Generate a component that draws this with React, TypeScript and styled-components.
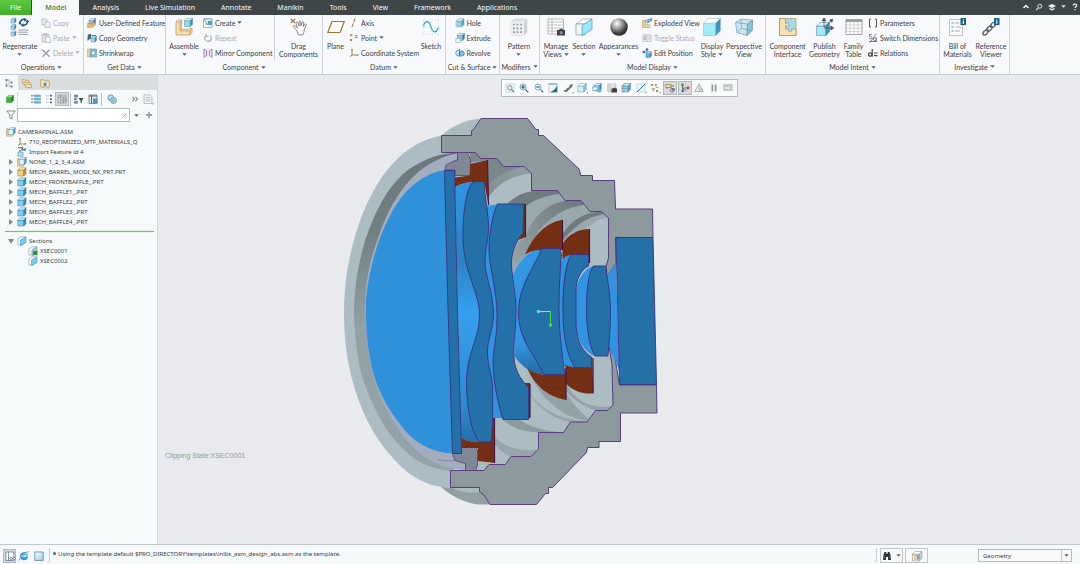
import React from 'react';
import styled, { createGlobalStyle } from 'styled-components';

const GlobalStyle = createGlobalStyle`
  * { box-sizing: border-box; }
  html, body, #root { height: 100%; }
  body {
    margin: 0;
    overflow: hidden;
    font-family: 'Noto Sans', 'Open Sans', sans-serif;
    font-size: 6px;
    line-height: 8px;
    color: #3c4145;
    background: #e9eaee;
  }
  button, input, select { font: inherit; color: inherit; margin: 0; padding: 0; border: 0; background: none; border-radius: 0; }
  svg { display: block; flex: none; overflow: visible; }
`;

const Shell = styled.div`
  display: flex;
  flex-direction: column;
  height: 100vh;
`;

/* ---------- menu bar ---------- */
const MenuBar = styled.nav`
  display: flex;
  flex: none;
  height: 15px;
  font-size: 7px;
  background: #3e4647;
`;
const MenuTab = styled.button<{ $kind?: 'file' | 'active' }>`
  height: 15px;
  padding: 0 ${p => (p.$kind === 'file' ? 10 : 13)}px;
  margin-right: ${p => (p.$kind === 'file' ? 1 : 0)}px;
  white-space: nowrap;
  font-weight: ${p => (p.$kind === 'active' ? 600 : 400)};
  color: ${p => (p.$kind === 'active' ? '#4f8c3c' : '#f6f8f8')};
  background: ${p => (p.$kind === 'file' ? 'linear-gradient(#5cc93e, #43ad2c)' : p.$kind === 'active' ? '#f8f9fb' : 'transparent')};
`;
const MenuTools = styled.div`
  display: flex;
  align-items: center;
  gap: 5px;
  height: 13px;
  margin-left: auto;
  padding-right: 1px;
`;
const BareButton = styled.button`
  display: flex;
  align-items: center;
  justify-content: center;
  color: inherit;
`;

/* ---------- ribbon ---------- */
const Ribbon = styled.div`
  display: flex;
  flex: none;
  height: 60px;
  font-family: Lato, 'Noto Sans', sans-serif;
  font-size: 7px;
  background: #f8f9fb;
  border-bottom: 1px solid #c6cdd0;
`;
const GroupBox = styled.section<{ $w: number }>`
  display: flex;
  flex-direction: column;
  flex: none;
  width: ${p => p.$w}px;
  border-right: 1px solid #cdd0d4;
`;
const GroupBody = styled.div<{ $center?: boolean }>`
  display: flex;
  height: 45px;
  justify-content: ${p => (p.$center ? 'center' : 'flex-start')};
`;
const GroupLabel = styled.button`
  display: flex;
  align-items: center;
  justify-content: center;
  gap: 2px;
  height: 15px;
  white-space: nowrap;
`;
const Divider = styled.div`
  width: 1px;
  background: #cdd0d4;
`;
const BigButton = styled.button<{ $w: number }>`
  display: flex;
  flex-direction: column;
  align-items: center;
  flex: none;
  width: ${p => p.$w}px;
  padding-top: 3px;
  white-space: nowrap;
`;
const BigLabel = styled.span`
  display: flex;
  flex-direction: column;
  align-items: center;
  margin-top: 6px;
`;
const LabelLine = styled.span`
  display: flex;
  align-items: center;
  justify-content: center;
  gap: 2px;
  height: 8px;
`;
const Stack = styled.div<{ $w: number }>`
  display: flex;
  flex-direction: column;
  flex: none;
  width: ${p => p.$w}px;
`;
const SmallButton = styled.button<{ $off?: boolean }>`
  display: flex;
  align-items: center;
  gap: 2px;
  height: 15px;
  padding-left: 1px;
  white-space: nowrap;
  color: ${p => (p.$off ? '#a9acb0' : 'inherit')};
`;

const Caret = ({ c = '#5b6064' }: { c?: string }) => (
  <svg width="5" height="3" viewBox="0 0 5 3"><path d="M0.3 0.2h4.4L2.5 2.8z" fill={c} /></svg>
);

/* ---------- icon drawings ---------- */
type CubeProps = { x?: number; y?: number; s?: number; f?: string; t?: string; r?: string; k?: string };
const Cube = ({ x = 0, y = 0, s = 9, f = '#9fe0f7', t = '#e6f6fc', r = '#2a8fc4', k = '#5d8fa8' }: CubeProps) => {
  const d = s * 0.28;
  const w = s - d;
  return (
    <g stroke={k} strokeWidth="0.5" strokeLinejoin="round">
      <path d={`M${x} ${y + d}h${w}v${w}h${-w}z`} fill={f} />
      <path d={`M${x} ${y + d}l${d} ${-d}h${w}l${-d} ${d}z`} fill={t} />
      <path d={`M${x + w} ${y + d}l${d} ${-d}v${w}l${-d} ${d}z`} fill={r} />
    </g>
  );
};

const icons: Record<string, React.ReactNode> = {
  regenerate: (
    <g>
      <Cube x={0} y={0} s={5} /><Cube x={0} y={6.5} s={5} /><Cube x={0} y={13} s={5} />
      <path d="M9 5a4 3.6 0 0 1 5-3.6M16.5 3.2a4 3.6 0 0 1-4.6 4" fill="none" stroke="#17587f" strokeWidth="1.6" />
      <path d="M13.2 0l3 1.8-3 2zM12.4 5.2l-3 1.9 3 1.9zM7.2 4.4h3.6L9 7zM14.7 4h3.4l-1.7-2.6z" fill="#17587f" />
      <path d="M7.5 12h10M6.5 14.2h10M7.5 16.4h10" stroke="#9aa0a4" strokeWidth="1" />
    </g>
  ),
  assemble: (
    <g>
      <path d="M1 4h4l1.6-1.6v9H13l2-1h2v4L15 17H1z" fill="#f6dfae" stroke="#b7935a" strokeWidth="0.7" />
      <path d="M1 4l1.5-2H6.6L5 4v9h10l2-2M5 13l1.6-1.8M15 13v4" fill="none" stroke="#b7935a" strokeWidth="0.7" />
      <Cube x={9.5} y={0.5} s={8} f="#8edcf8" />
    </g>
  ),
  drag: (
    <g fill="none">
      <path d="M0.8 1l4.4 4M5.2 1L0.8 5" stroke="#9a7a3c" strokeWidth="1.2" />
      <path d="M6.5 12L3.6 9.2c-.9-1 .4-2.2 1.4-1.4l2.4 2L6 5.4c-.4-1.2 1.2-1.7 1.7-.6l1.4 3.4L8.8 4c0-1.2 1.6-1.3 1.8-.1l.5 4 .9-3.5c.3-1.1 1.800-.8 1.700.3l-.4 4 1.500-2.400c.7-1 2-.2 1.500.8L14.500 11l-.6 3.200-1 2.600H8.400z" fill="#fff" stroke="#565b5f" strokeWidth="0.7" />
    </g>
  ),
  plane: <path d="M5 3.5h12.3L13 14.5H.8z" fill="#fcfbf8" stroke="#9a7a3c" strokeWidth="1.2" />,
  sketch: (
    <g fill="none">
      <path d="M2 1v16M9 1v16M16 1v16M1 2h16M1 9h16M1 16h16" stroke="#c3c7ca" strokeWidth="0.7" strokeDasharray="1 2" />
      <path d="M1.5 7C4 2 7 2.5 8.8 8.5s5.2 7.5 7.4 1.5" stroke="#2fa3d8" strokeWidth="1.1" />
      <circle cx="1.6" cy="8" r="0.9" fill="#fff" stroke="#2fa3d8" strokeWidth="0.5" />
      <circle cx="16.4" cy="10" r="0.9" fill="#fff" stroke="#2fa3d8" strokeWidth="0.5" />
    </g>
  ),
  pattern: (
    <g>
      <path d="M1 4l3-3h13v13l-3 3H1z" fill="#e1e3e4" stroke="#c6c9cb" strokeWidth="0.6" />
      <path d="M1 4h13v13H1z" fill="#eff0f1" />
      <path d="M14 4l3-3v13l-3 3z" fill="#cdd0d2" />
      <path d="M3 6.500h9M3 10.300h9M3 14.100h9" stroke="#8b8f92" strokeWidth="1.700" strokeDasharray="1.700 1.950" />
    </g>
  ),
  manage: (
    <g>
      <path d="M1 1h15.5v15H1z" fill="#fff" stroke="#a4a8ab" strokeWidth="0.8" />
      <path d="M1 4h15.5M1 7h15.5M1 10h15.5M1 13h15.5M5 1v15" stroke="#a4a8ab" strokeWidth="0.7" />
      <path d="M10 12h2l1-1.3h2.400l1 1.300H18v5.500h-8z" fill="#3c4144" /><circle cx="14.1" cy="14.7" r="1.6" fill="#8d9294" />
    </g>
  ),
  section: (
    <g stroke="#8d959a" strokeWidth="0.7" strokeLinejoin="round">
      <path d="M1 6l7-5h9l-7 5z" fill="#fff" /><path d="M1 6h9v11H1z" fill="#f4f6f7" />
      <path d="M7 7.500L17 1v10.500L7 17.500z" fill="#9be6fa" stroke="#4a9fc0" />
    </g>
  ),
  sphere: <circle cx="9" cy="9" r="8.8" fill="url(#ballShade)" />,
  display: <Cube x={0.5} y={0.5} s={17} f="#a4ebfa" t="#fff" r="#3b95bd" k="#8bb4c6" />,
  perspective: (
    <g stroke="#6f9bae" strokeWidth="0.7" strokeLinejoin="round">
      <path d="M0.5 4.5L6 1l11.5 1-.5 10.5L12 17.500l-10-3z" fill="#cbe7ef" />
      <path d="M12.500 6l5-4-.5 10.500-5 5z" fill="#8ec6da" />
      <path d="M0.500 4.500L12.500 6l5-4M12.500 6L12 17.500M6 1l.5 9.500 10.500 2M6.500 10.500L2 14.500" fill="none" />
    </g>
  ),
  compInterface: (
    <g>
      <path d="M0.5 0.5H17v17H0.500z" fill="#9fdcf2" stroke="#b08a4a" strokeWidth="0.6" />
      <path d="M0.5 0.5H6.500v5.200c1.200-1.500 3.400-.8 3.400 1s-2.200 2.300-3.400.9V11h3.300c-.9 2 .3 3 1.600 2.900 1.500-.2 1.700-1.800 1-2.900H17v6.500H0.500z" fill="#f8e2b4" stroke="#b08a4a" strokeWidth="0.7" />
    </g>
  ),
  publish: (
    <g>
      <Cube x={0.5} y={4.5} s={13} f="#a4ebfa" t="#d9f3fa" r="#3b95bd" k="#477a90" />
      <path d="M8 9V1M8 9l7-6M8 10h8M8 0L6 2.800h4zM16.800 1.200l-3.200.9 2.200 2.200zM17.800 10l-3-2v4z" fill="#474c50" stroke="#474c50" strokeWidth="0.7" />
    </g>
  ),
  family: (
    <g>
      <path d="M1 1.500h16v15H1z" fill="#fff" stroke="#8d9194" strokeWidth="0.8" />
      <path d="M1 3h16" stroke="#8d9194" strokeWidth="1.8" />
      <path d="M1 7h16M1 10.200h16M1 13.400h16M5 3v13M9 3v13M13 3v13" stroke="#b6babd" strokeWidth="0.6" />
    </g>
  ),
  bom: (
    <g>
      <path d="M0.500 1.500H13.500v16H0.500z" fill="#f7f8f9" stroke="#b6babd" strokeWidth="0.8" />
      <path d="M2.500 5h2M2.500 9h2M2.500 13h2" stroke="#6db9de" strokeWidth="1.6" /><path d="M6 5h4M7 9h5M6 13h5" stroke="#9ba0a3" strokeWidth="0.8" />
      <path d="M11.500 0h5.500v7h-5.500z" fill="#16617f" /><path d="M14.300 1.200v1.200M14.300 3v3" stroke="#fff" strokeWidth="1.1" />
    </g>
  ),
  refViewer: (
    <g>
      <g fill="none" stroke="#5b6064" strokeWidth="1.3">
        <ellipse cx="3.6" cy="14.4" rx="3.3" ry="1.9" transform="rotate(-45 3.6 14.4)" />
        <ellipse cx="7.4" cy="10.6" rx="3.3" ry="1.9" transform="rotate(-45 7.4 10.6)" />
        <ellipse cx="11" cy="7" rx="3" ry="1.9" transform="rotate(-45 11 7)" />
      </g>
      <path d="M12 0h5.500v7H12z" fill="#16617f" /><path d="M14.800 1.200v1.200M14.800 3v3" stroke="#fff" strokeWidth="1.1" />
    </g>
  ),

  copy: <g fill="#eceeef" stroke="#b4b8bb" strokeWidth="0.8"><path d="M1 1h4l1 1v5H1z" /><path d="M4 3.500h4l1.200 1.200V9.500H4z" /></g>,
  paste: <g fill="#e3e5e6" stroke="#b4b8bb" strokeWidth="0.8"><path d="M1 1.500h7v7.500H1zM3 .6h3v1.600H3z" /><path d="M4.500 4h3.500l1.400 1.300v4.200H4.500z" fill="#fafafa" /></g>,
  del: <path d="M1.500 1.800l7 7M8.500 1.800l-7 7" stroke="#97999c" strokeWidth="1.3" />,
  udf: <g><Cube x={2} y={0.5} s={6.5} f="#a9bde4" r="#4a6fb0" /><path d="M0.500 5.500h4V9.500h-4zM5 4l4 2-3 3.500z" fill="#eeb95c" stroke="#a97c34" strokeWidth="0.4" /></g>,
  copyGeo: <g><path d="M0.800 1.500L4 .8v5L.8 7z" fill="#3d6b84" /><path d="M4 2.500h5M1 3.800v4" stroke="#555" strokeWidth="0.8" /><Cube x={4} y={3.5} s={5.5} /></g>,
  shrink: <g><path d="M0.500 1h3v8h-3z" fill="#f2d49a" stroke="#a98b56" strokeWidth="0.4" /><path d="M3 1h6.500v8H3z" fill="#8ac4de" stroke="#4c86a0" strokeWidth="0.5" /><path d="M4.500 3.500L8 2.500v4l-3.500 1z" fill="#e7f6fc" stroke="#33799c" strokeWidth="0.5" /></g>,
  create: <g><path d="M0.500 1h3v5.500h5.500V9.500H.5z" fill="#f0f2f3" stroke="#b7935a" strokeWidth="0.7" /><path d="M1 .8h8v5.500H4z" fill="#cfeaf5" stroke="#5c93ac" strokeWidth="0.7" /><path d="M5 3h4v4H5z" fill="#49a5cf" /></g>,
  repeat: <path d="M3 2.500a3.300 3.300 0 1 0 4.300.2M3 .8v2.400h2.400" fill="none" stroke="#a4a7aa" strokeWidth="1.1" />,
  mirror: <g fill="#f0e8f7" stroke="#8a6aae" strokeWidth="0.8"><path d="M1 1l2.500 1.500v5L1 9.500zM9 1L6.500 2.500v5L9 9.500z" /><path d="M5 0.500v9" strokeDasharray="1 1" strokeWidth="0.5" /></g>,
  axis: <path d="M6 .5L2.800 9.500" stroke="#9a7a3c" strokeWidth="1" strokeDasharray="4 1.200" />,
  point: <path d="M1 1l2.400 2.400M3.400 1L1 3.400M5.800 2.600h3M5.800 4.400h3M.8 5.800l2.400 2.400M3.200 5.800L.8 8.200" stroke="#9a7a3c" strokeWidth="0.9" />,
  csys: <g><path d="M3 1v6h6M3 7L.8 9" fill="none" stroke="#9a7a3c" strokeWidth="0.9" /><path d="M2 2.200h2L3 .4zM7.800 6v2L9.600 7z" fill="#9a7a3c" /></g>,
  hole: <g><Cube x={1} y={0.8} s={8} f="#cdebf6" r="#58a7cb" /><ellipse cx="4" cy="6" rx="1.3" ry="1.8" fill="#fff" stroke="#2a7ca6" strokeWidth="0.7" /></g>,
  extrude: <g><Cube x={2.5} y={0.5} s={7} f="#8fcde6" t="#cfe9f3" r="#2f83ac" /><path d="M0.800 5.500h4.500V9.500H.8z" fill="#f2f4f5" stroke="#8d9497" strokeWidth="0.5" /></g>,
  revolve: <g><ellipse cx="3.2" cy="5" rx="2.4" ry="2.8" fill="#cdebf6" stroke="#2f83ac" strokeWidth="0.7" /><circle cx="6.7" cy="5.5" r="2.6" fill="#7cc6e6" stroke="#2f83ac" strokeWidth="0.7" /><path d="M4.500 1v8" stroke="#2b6988" strokeWidth="0.7" /></g>,
  exploded: <g><path d="M.5 2.500h2.300v4.200h5V9.500H.5z" fill="#f2d49a" stroke="#b08a4a" strokeWidth="0.5" /><Cube x={3.5} y={1.5} s={3.5} /><Cube x={6.7} y={0.5} s={3} /></g>,
  toggle: <g fill="none" stroke="#b2b5b8" strokeWidth="0.8"><path d="M1 1.800h8v6.500H1zM5 1.800v6.500M6 4h2.500M6 6h2.500" /><path d="M2 3.500h1.800v3H2z" fill="#c6c9cb" /></g>,
  editPos: <g><path d="M5 .5v7M1 4h8M5 .3L3.800 2h2.400zM.6 4l1.700-1.200v2.400z" stroke="#2b6988" strokeWidth="0.7" fill="#2b6988" /><Cube x={4} y={4} s={5.5} f="#58b4dc" /></g>,
  params: <g fill="none" stroke="#55595d" strokeWidth="1"><path d="M3 1H1.500v8H3M7 1h1.500v8H7" /></g>,
  switchDim: <g fill="none" stroke="#61666a" strokeWidth="0.8"><path d="M3.800 1.500H1.500v2C3 3 4 3.800 3.800 4.800S2 6 1 5.400M2 9.500L8 .8" /><circle cx="6.8" cy="6.3" r="1.5" /><path d="M8.300 4.500V9M1 8.500h8" /></g>,
  relations: <g fill="none" stroke="#3f4447" strokeWidth="1.2"><circle cx="2.2" cy="6.5" r="1.7" /><path d="M4.200 1v7.800M6 5h3.500M6 7.600h3.500" /></g>,

  modelTree: <g fill="#777c80"><path d="M1.500 1h2v2h-2zM1.500 6.500h2v2h-2zM6.500 3.500h2V5.500h-2zM6.500 7.500h2V9.500h-2z" /><path d="M2.500 3v4M4 2h2M5 2v6.500h1.500" fill="none" stroke="#888" strokeWidth="0.5" /></g>,
  layers: <g fill="#f7e9c8" stroke="#b98f45" strokeWidth="0.7"><path d="M.6 1.500h2l.6.800H6.400v3H.6z" /><path d="M2.200 3.700h2l.6.800H8v3H2.200z" /><path d="M3.800 5.900h2l.6.600H9.500v2.900H3.800z" /></g>,
  favFolder: <g><path d="M.8 1.800h3l1 1.200h4.400v6H.8z" fill="#f8ebcb" stroke="#b98f45" strokeWidth="0.7" /><path d="M5 4l.7 1.500 1.600.1-1.200 1 .4 1.600L5 7.400l-1.500.8.400-1.600-1.200-1 1.600-.1z" fill="#2a84ad" /></g>,
  greenCube: <Cube x={0.5} y={0.5} s={9} f="#3fae3a" t="#9ddc8d" r="#237a24" k="#2c8a2a" />,
  list1: <g><path d="M3.500 1h6v1.800h-6zM3.500 4.200h6V6h-6zM3.500 7.400h6v1.800h-6z" fill="#63bfe0" stroke="#3c7d97" strokeWidth="0.4" /><path d="M0 1.800h2.500M0 5h2.500M0 8.200h2.500" stroke="#585c60" strokeWidth="0.9" /></g>,
  list2: <g><path d="M6 .8h2v1.800H6zM6 4.200h2V6H6zM6 7.500h2v1.800H6z" fill="#666b6f" /><path d="M2 1.800h3M2 5h3M2 8.200h3" stroke="#84888b" strokeWidth="0.7" strokeDasharray="1 0.6" /></g>,
  columns: <g fill="none" stroke="#7c8184" strokeWidth="0.6"><path d="M1 1h8v8H1zM1 3h8M3.500 1v8M6.500 3v6" /><path d="M5 5h4.500v2H5z" fill="#c8cbcd" /></g>,
  treeFilter: <g><path d="M.5 1h3v2h-3zM.5 4.200h2v1.800h-2zM.5 7.500h3v1.800h-3z" fill="#5fa9c6" stroke="#4c5256" strokeWidth="0.5" /><path d="M4.500 4h5.300L7.800 6.500v3L6.500 8.500v-2z" fill="#45494d" /></g>,
  treeCols: <g><path d="M1 1h8v8.500H1z" fill="#dff0f6" stroke="#5c6165" strokeWidth="0.7" /><path d="M1 2h8M3.500 1v8" stroke="#5c6165" strokeWidth="1" /><path d="M5 4.500h4.500v4.500H5z" fill="#4d9abb" /></g>,
  gears: <g fill="#b9dbe8" stroke="#4b8aa4" strokeWidth="0.8"><circle cx="3.8" cy="3.8" r="2.9" /><circle cx="6.5" cy="6.5" r="2.9" /><circle cx="6.5" cy="6.5" r="0.9" fill="#fff" /></g>,
  doc: <g><path d="M1 .8h6l2 2V9.500H1z" fill="#f4f5f6" stroke="#a4a8ab" strokeWidth="0.7" /><path d="M2.500 3.500h4M2.500 5.300h5M2.500 7.100h5" stroke="#9ba0a3" strokeWidth="0.6" /><path d="M9 10.300l1.500-1.500v1.500z" fill="#666" /></g>,
  funnel: <path d="M.8 1h8.400L6 5v4L4 8V5z" fill="#fff" stroke="#6f7477" strokeWidth="0.8" />,
  plus: <path d="M5 1.800v6.400M1.800 5h6.400" stroke="#85898c" strokeWidth="1.3" />,
  more: <path d="M2.500 2.800L4.500 5l-2 2.200M5.500 2.800L7.500 5l-2 2.200" fill="none" stroke="#4c5154" strokeWidth="1" />,

  asm: <g><path d="M.5 2L2 .8v6.400h5.500L6.500 9.200h-6z" fill="#f3d69c" stroke="#b08a4a" strokeWidth="0.5" /><Cube x={2.3} y={0.6} s={7} f="#e4f5fb" r="#4aa3cc" /></g>,
  importF: <g><path d="M1 .8h5L4.500 3h4M3 3v3" fill="none" stroke="#44484b" strokeWidth="0.9" /><path d="M5 2l4.300-1L8.500 4.500z" fill="#44a0cb" /><path d="M1 5h5v4.200H1z" fill="#b4dff0" stroke="#3e84a6" strokeWidth="0.5" /></g>,
  partTan: <Cube x={0.8} y={0.8} s={8.2} f="#f6d089" t="#fbe9bf" r="#d08f2d" k="#9c6c22" />,
  part: <Cube x={0.8} y={0.8} s={8.2} f="#7fcdf0" t="#d3effa" r="#2d8fc4" k="#37809f" />,
  sect: <g stroke="#7f8a90" strokeWidth="0.5"><path d="M.8 3l3-2.200h5l-3 2.200v6h-5z" fill="#f4f6f7" /><path d="M3.500 4L9 1v5.500L3.500 9.500z" fill="#74cdf0" stroke="#3385a8" /></g>,
  sectOn: <g stroke="#7f8a90" strokeWidth="0.5"><path d="M.8 3l3-2.200h5l-3 2.200v6h-5z" fill="#f4f6f7" /><path d="M4 4l5-3v5.500L4 9.500z" fill="#a9d6e4" stroke="#3385a8" /><path d="M5 4.800h4.500v4.500H5z" fill="#3ba636" stroke="none" /><path d="M5.800 5.800l3 2.700M8.800 5.800l-3 2.700" stroke="#174f15" /></g>,

  refit: <g><path d="M.8 1h8.400v8H.8z" fill="#f8fafb" stroke="#b4b9bc" strokeWidth="0.5" /><circle cx="4.8" cy="4.8" r="2.3" fill="#d7ebf3" stroke="#5c7f8f" strokeWidth="0.8" /><path d="M6.500 6.500L9 9" stroke="#5c7f8f" strokeWidth="1.1" /></g>,
  zoomIn: <g><circle cx="4" cy="4" r="3" fill="#d9edf6" stroke="#6a9cb4" strokeWidth="0.8" /><path d="M4 2.300v3.400M2.300 4h3.400" stroke="#17587f" strokeWidth="1.2" /><path d="M6.300 6.300L9.300 9.300" stroke="#3c6c84" strokeWidth="1.2" /></g>,
  zoomOut: <g><circle cx="4" cy="4" r="3" fill="#e4f1f7" stroke="#6a9cb4" strokeWidth="0.8" /><path d="M2.300 4h3.400" stroke="#17587f" strokeWidth="1" /><path d="M6.300 6.300L9.300 9.300" stroke="#3c6c84" strokeWidth="1.2" /></g>,
  repaint: <g><path d="M.8 1h8.400v8.200H.8z" fill="#f3f6f7" stroke="#9aa1a5" strokeWidth="0.5" /><path d="M9.200 2v7.200H2C5.500 8 8 5.500 9.200 2z" fill="#1f6f96" /><path d="M.8 1h8.400" stroke="#58a7cb" strokeWidth="1" /></g>,
  render: <g><path d="M.8 7c1.500.6 2.700-.3 3-2l2-.5 1-2.500 2.500-1.200c.5 2 .2 3-1 4L6 6.500c-1 2.500-3.500 3-5 2z" fill="#6f7477" /><path d="M9 10.300l1.500-1.500v1.500z" fill="#555" /></g>,
  styleCube: <g><Cube x={0.8} y={0.5} s={8.5} f="#d3f2fa" t="#fff" r="#8ccbe0" k="#5d9ab2" /><path d="M9.300 10.300l1.500-1.500v1.500z" fill="#555" /></g>,
  orient: <g><Cube x={1.8} y={0.5} s={7.5} f="#a5dcef" /><path d="M.5 4h5v3.500h-5z" fill="#e8f4f8" stroke="#3e84a6" strokeWidth="0.5" /><circle cx="7.5" cy="7.5" r="1.8" fill="#70c3e4" stroke="#33799c" strokeWidth="0.4" /></g>,
  viewMgr: <g><path d="M.8 1h8v7.500h-8zM.8 3h8M.8 5h8M.8 7h8M3 1v7.500" fill="#fff" stroke="#8f9497" strokeWidth="0.5" /><path d="M4.500 5.500H6l.7-.8h1.400l.6.800H10v4H4.500z" fill="#3c4144" /></g>,
  persp: <g><Cube x={1} y={0.5} s={8.5} f="#a3d3e5" t="#cfe9f3" r="#5fa8c6" k="#4a7f95" /><path d="M3 .8v8M1 5.500h8" stroke="#4a7f95" strokeWidth="0.4" /></g>,
  clip: <g><path d="M1 1h8v8H1z" fill="#eef6f9" stroke="#9dbdca" strokeWidth="0.5" /><path d="M1 9L9 1" stroke="#2a7ca6" strokeWidth="1" /><path d="M9 10.300l1.500-1.500v1.500z" fill="#555" /></g>,
  datum: <g stroke="#94753a" strokeWidth="0.8" fill="none"><path d="M1 1l2 2M3 1L1 3M4.500 1.500h2l-1 2M6 4l2.500 1M1.500 5.500l3 1M4.500 5l-2 3.500M6 7l2 2M8 7L6 9" /><path d="M9 10.300l1.500-1.500v1.500z" fill="#555" stroke="none" /></g>,
  annot: <g fill="none" stroke="#55595d" strokeWidth="0.7"><path d="M.8 1.500h5v3h-5z" fill="#f6e4b8" stroke="#94753a" /><path d="M6 3h3M6.500 4.500v1h3M2 4.500V6" /><circle cx="7" cy="7.5" r="1.7" /><circle cx="8.5" cy="6.8" r="1" /></g>,
  spin: <g><path d="M2.500 1.800v6M2.500 5h5M2.500 5l4 3" stroke="#606569" strokeWidth="0.8" /><circle cx="2.5" cy="2" r="1.4" fill="#3ea03a" /><circle cx="8" cy="5" r="1.4" fill="#cf4233" /><circle cx="2.8" cy="8" r="1.3" fill="#2d78b5" /></g>,
  simulate: <g fill="#eceeef" stroke="#a4a8ab" strokeWidth="0.9"><path d="M5 .8L9.200 8.500H.8z" /><path d="M5 3.500v3" /><circle cx="7" cy="7.3" r="1.4" /></g>,
  pause: <path d="M2.500 1.500h1.700v7H2.500zM5.800 1.500h1.700v7H5.800z" fill="#8d9194" />,
  resume: <g fill="#c9cccd" stroke="#a9adaf" strokeWidth="0.5"><path d="M.8 1.500h8.400v6H.8z" /><path d="M1 3.800h4v-1.600L7.500 5 5 7.500V6H1z" fill="#f0f1f2" /></g>,

  navToggle: <g><path d="M.8 1h8v8.500h-8zM3.500 1v8.500" fill="#fff" stroke="#3e6f88" strokeWidth="0.7" /><path d="M5 7.500h5" stroke="#33373a" strokeWidth="1" /><circle cx="6" cy="7.5" r="1.2" fill="#fff" stroke="#33373a" strokeWidth="0.5" /><circle cx="9" cy="7.5" r="1.2" fill="#fff" stroke="#33373a" strokeWidth="0.5" /></g>,
  browser: <g><circle cx="5" cy="5.3" r="3.7" fill="#3aa0d6" stroke="#1d6f9d" strokeWidth="0.5" /><path d="M.6 8.500C2 4 6 1.500 9.600 1c-2 1-3.300 2.500-4 4H9M3 5.200h4" fill="none" stroke="#eaf6fc" strokeWidth="0.9" /><path d="M.4 9.300C1 5 5.500 1 9.600.8" fill="none" stroke="#2b7fb0" strokeWidth="0.7" /></g>,
  fullScreen: <path d="M.8 1h8.400v8.400H.8z" fill="url(#paneShade)" stroke="#3b7390" strokeWidth="0.7" />,
  find: <g fill="#33383b"><path d="M1 9l.5-5L2.500 1h1.700l.4 2h.8l.4-2h1.700l1 3L9 9H6V6H4v3z" /><path d="M2 6.500h1M7 6.500h1" stroke="#9aa" strokeWidth="0.6" /></g>,
  selBox: <g><Cube x={0.5} y={0.5} s={9.5} f="#f3f0e6" t="#fff" r="#c9cdd0" k="#80868a" /><path d="M2 5l2-1h3v4l-1.500 1H2z" fill="#5cb8de" /><path d="M2 5h3v4H2z" fill="#f2cf86" /></g>,
};

const Icon = ({ name, size = 10 }: { name: string; size?: number }) => (
  <svg width={size} height={size} viewBox={size > 12 ? '0 0 18 18' : '0 0 10 10'} aria-hidden="true">
    {icons[name]}
  </svg>
);

const Small = ({ icon, text, menu, off }: { icon: string; text: string; menu?: boolean; off?: boolean }) => (
  <SmallButton $off={off} disabled={off}>
    <Icon name={icon} />{text}{menu && <Caret c={off ? '#a9acb0' : undefined} />}
  </SmallButton>
);
const Big = ({ icon, lines, w, menu }: { icon: string; lines: string[]; w: number; menu?: 'below' | 'inline' }) => (
  <BigButton $w={w}>
    <Icon name={icon} size={18} />
    <BigLabel>
      {lines.map((l, i) => (
        <LabelLine key={l}>{l}{menu === 'inline' && i === lines.length - 1 && <Caret />}</LabelLine>
      ))}
      {menu === 'below' && <LabelLine><Caret /></LabelLine>}
    </BigLabel>
  </BigButton>
);
const Group = ({ w, label, center, children }: { w: number; label: string; center?: boolean; children: React.ReactNode }) => (
  <GroupBox $w={w}>
    <GroupBody $center={center}>{children}</GroupBody>
    <GroupLabel>{label}<Caret /></GroupLabel>
  </GroupBox>
);

/* ---------- work area ---------- */
const Work = styled.div`
  display: flex;
  flex: 1;
  min-height: 0;
`;
const Side = styled.aside`
  display: flex;
  flex-direction: column;
  flex: none;
  width: 158px;
  background: #f6fafb;
  border-right: 1px solid #d5d9dc;
`;
const SideTabs = styled.div`
  display: flex;
  height: 15px;
  background: #d8dedd;
`;
const SideTab = styled.button<{ $on?: boolean }>`
  display: flex;
  align-items: center;
  justify-content: center;
  width: 18px;
  background: ${p => (p.$on ? '#f6fafb' : 'transparent')};
`;
const SideTools = styled.div`
  display: flex;
  align-items: center;
  height: 18px;
  padding: 0 2px 0 5px;
`;
const ToolButton = styled.button<{ $w?: number; $on?: boolean }>`
  display: flex;
  align-items: center;
  justify-content: center;
  flex: none;
  width: ${p => p.$w ?? 14}px;
  height: 14px;
  border: 1px solid ${p => (p.$on ? '#b4b8ba' : 'transparent')};
  background: ${p => (p.$on ? '#d9dbdd' : 'transparent')};
`;
const Rule = styled.span<{ $dots?: boolean }>`
  width: 1px;
  height: 13px;
  margin: 0 ${p => (p.$dots ? 2 : 1)}px;
  border-left: 1px ${p => (p.$dots ? 'dotted #b9bdc0' : 'solid #b9bdc0')};
`;
const Spacer = styled.span`
  flex: 1;
`;
const SearchRow = styled.div`
  display: flex;
  align-items: center;
  height: 14px;
  padding-left: 6px;
  gap: 1px;
`;
const SearchBox = styled.div`
  display: grid;
  width: 113px;
  height: 14px;
  align-items: center;
  background: #fff;
  border: 1px solid #b5babd;
  & > * { grid-area: 1 / 1; }
`;
const SearchInput = styled.input`
  width: 100%;
  height: 12px;
  padding: 0 12px 0 3px;
`;
const ClearButton = styled.button`
  justify-self: end;
  width: 10px;
  height: 10px;
  display: grid;
  place-items: center;
`;
const Tree = styled.ul<{ $top: number }>`
  list-style: none;
  margin: 0;
  padding: ${p => p.$top}px 0 0 6px;
`;
const Row = styled.li<{ $nested?: boolean }>`
  display: flex;
  align-items: center;
  gap: 2px;
  height: 10px;
  padding-left: ${p => (p.$nested ? 22 : 0)}px;
  white-space: nowrap;
`;
const Twist = styled.span`
  display: flex;
  justify-content: center;
  width: 9px;
`;
const InsertLine = styled.div`
  height: 1px;
  margin: 4px 3px 0 5px;
  background: #6cc95c;
  box-shadow: 0 0 1px #6cc95c;
`;

const treeRows: { t: string; icon: string; twist?: boolean }[] = [
  { t: '710_REOPTIMIZED_MTF_MATERIALS_Q', icon: 'csys' },
  { t: 'Import Feature id 4', icon: 'importF' },
  { t: 'NONE_1_2_3_4.ASM', icon: 'asm', twist: true },
  { t: 'MECH_BARREL_MODI_NX_PRT.PRT', icon: 'partTan', twist: true },
  { t: 'MECH_FRONTBAFFLE_.PRT', icon: 'part', twist: true },
  { t: 'MECH_BAFFLE1_.PRT', icon: 'part', twist: true },
  { t: 'MECH_BAFFLE2_.PRT', icon: 'part', twist: true },
  { t: 'MECH_BAFFLE3_.PRT', icon: 'part', twist: true },
  { t: 'MECH_BAFFLE4_.PRT', icon: 'part', twist: true },
];
const Right = () => <svg width="4" height="6" viewBox="0 0 4 6"><path d="M0 0l4 3-4 3z" fill="#84898c" /></svg>;
const Down = () => <svg width="6" height="5" viewBox="0 0 6 5"><path d="M0 0h6L3 5z" fill="#84898c" /></svg>;

/* ---------- viewport ---------- */
const Viewport = styled.main`
  position: relative;
  display: flex;
  flex-direction: column;
  align-items: center;
  flex: 1;
  min-width: 0;
  overflow: hidden;
  background: #e9eaee;
`;
const ViewTools = styled.div`
  display: flex;
  align-items: center;
  justify-content: space-between;
  flex: none;
  width: 237px;
  height: 18px;
  margin-top: 4px;
  padding: 0 1px;
  background: #f8fafb;
  border: 1px solid #b6babd;
`;
const ModelSvg = styled.svg`
  position: absolute;
  left: 182px;
  top: 35px;
`;
const ClipNote = styled.span`
  position: absolute;
  left: 7px;
  top: 377px;
  font-family: 'Liberation Sans', Arial, sans-serif;
  font-size: 7px;
  color: #96999e;
`;
const viewTools = ['refit', 'zoomIn', 'zoomOut', 'repaint', 'render', 'styleCube', 'orient', 'viewMgr', 'persp', 'clip', 'datum', 'annot', 'spin', 'simulate', 'pause', 'resume'];

const Model = () => (
  <ModelSvg width="325" height="400" viewBox="340 110 325 400" role="img" aria-label="Sectioned lens assembly">
    <defs>
      <linearGradient id="ringDark" x1="0" y1="0" x2="0" y2="1"><stop offset="0" stopColor="#6b777b" /><stop offset="0.25" stopColor="#727f83" /><stop offset="0.55" stopColor="#93a1a5" /><stop offset="1" stopColor="#94a3a8" /></linearGradient>
      <linearGradient id="cres" x1="0" y1="1" x2="1" y2="0"><stop offset="0" stopColor="#98a6aa" /><stop offset="1" stopColor="#6c787c" /></linearGradient>
      <linearGradient id="cresMid" x1="0" y1="1" x2="1" y2="0"><stop offset="0" stopColor="#7c898d" /><stop offset="1" stopColor="#96a5aa" /></linearGradient>
      <linearGradient id="blueV" x1="0" y1="0" x2="0" y2="1"><stop offset="0" stopColor="#2f96e4" /><stop offset="0.3" stopColor="#2b83c6" /><stop offset="0.5" stopColor="#359fee" /><stop offset="0.85" stopColor="#2d8cd4" /><stop offset="1" stopColor="#2470a8" /></linearGradient>
      <linearGradient id="blueArc" x1="0" y1="0" x2="0" y2="1"><stop offset="0" stopColor="#3296e2" /><stop offset="0.75" stopColor="#3296e2" /><stop offset="1" stopColor="#226a9f" /></linearGradient>
      <pattern id="rust" width="7" height="7" patternUnits="userSpaceOnUse">
        <path d="M0 0h7v7H0z" fill="#732e14" />
        <path d="M1 1h1v1H1zM4 0h1v1H4zM5 3h1v1H5zM2 4h1v1H2zM6 6h1v1H6zM0 6h1v1H0z" fill="#7a3419" />
        <path d="M3 2h1v1H3zM0 3h1v1H0zM4 5h1v1H4zM6 1h1v1H6z" fill="#6b290f" />
      </pattern>
    </defs>

    {/* outer shell and front ring */}
    <path d="M441 136C450 127 464 120 481 118.500L486 140H441z" fill="#abbcc1" />
    <path d="M441 487C452 497 466 503 478 504.500H490L482 485z" fill="#93a0a3" />
    <path d="M450 487c10 5 20 7 30 5v-6z" fill="#abbcc1" />
    <path d="M442 135.500C416 140 397 156 382 177C366 200 353 234 347 272C343 298 343 328 347 355C351 380 358 402 368 422C378 441 390 457 405 470C418 481 432 487 451 488L455 470L470 300L458 152z" fill="#abbdc3" />
    <path d="M458 152.500C440 153 424 159 408 170C392 182 380 202 372 222C360 250 354 284 354 315C355 342 358 366 365 385C374 410 386 432 402 448C416 462 430 469 451 471L462 460V160z" fill="url(#ringDark)" />
    <path d="M458 153C440 157 427 164 415 175C398 191 386 214 378 238C369 262 365 285 365 310C366 337 368 360 375 382C382 404 398 434 418 452C432 464 448 469 466 470.500L470 300z" fill="#a2adbf" />
    <path d="M444 170C428 173 415 182 405 193C388 212 370 254 366 300C365 328 368 352 373 372C378 391 390 414 408 434C420 446 436 453 453 453.500L456 300z" fill="#3091db" />
    <path d="M438 459.500C444 461 450 461 455 460.500" stroke="#7d889c" strokeWidth="1" fill="none" />

    {/* inside of the barrel */}
    <path d="M457 152.500H475.500L480.500 158.500H497L503.500 166.500H524L531.500 173.500V190.500H557.500L565 200.500H581L590 211.500H601.500L608.500 218L607 280L609 346L612 365L613 405L607.500 410.500H595.500L587 422H570.500L563.500 432.500H538.500V449L531 456.500H511L505.500 464.500H489L484 470.500H465z" fill="#abbdc3" />
    <path d="M470 152.500H476L481 158.500H497L504 166.500H524L531.500 173.500C512 175 497 184 488 198V160L470 163z" fill="url(#cresMid)" />
    <path d="M488 186C496 176 510 169 524 166.500H504L497 158.500H481L476 153H470V162L488 160z" fill="#7a878b" />
    <path d="M507 204C516 195 526 191 540 190.500H557.500L565 200.500H581L590 211.500H601.500L608 218C594 221 578 231 563 247V225L525 256L512 275V245L526 236V204z" fill="#9aa9ad" />
    <path d="M507 204C516 195 526 191 540 190.500H557.500L561 194C546 195 534 200 526 206V204z" fill="#6f7b7f" />
    <path d="M526 236C534 213 552 201 570 200.500H581L584 205C566 207 548 217 535 236L525 255L512 268V250z" fill="url(#cres)" />
    <path d="M563 233C572 220 583 213 601 211.500L604 214C586 217 574 227 563 240z" fill="#6f7b7f" />
    <path d="M590 226C596 220 602 218 608 218V268H590z" fill="#abbdc3" />
    <path d="M512 356C512 372 522 382 530 386V392C536 404 552 418 587 422L570 422C556 420 540 410 531 396L529 388L523 384C516 376 512 366 512 356z" fill="#96a5a9" />
    <path d="M528 368C534 388 548 404 566 414C574 418 582 421 588 421L589 419C580 412 571 402 566 392L565 399C552 396 538 388 528 368z" fill="#93a2a7" />
    <path d="M566 383C574 400 588 408 610 407L607.500 410.500H595.500C582 406 571 398 566 390z" fill="#93a2a7" />
    <path d="M503 420H520C530 427 545 431 563 432.500H538.500C525 432 511 428 503 420z" fill="#8d9b9f" />
    <path d="M494 436C504 447 518 451 537 450L531 456.500H511C503 453 497 448 494 443z" fill="#97a6aa" />

    {/* cut faces of the barrel */}
    <g fill="#8c9a9e" stroke="#5a3a80" strokeWidth="1" strokeLinejoin="round">
      <path d="M441.500 135.500H471.500V131L474.500 128L481 118.500H527.500L536 129.500H538.500V135.500H543.500L579.500 169.500L580.500 175.500H592.500V180.500H614.500L615.500 209H652.500L653 237.500H615.500L616 263L607 277L606 266.500L608.500 258V218L601.500 211.500H590L581 200.500H565L557.500 190.500H531.500V173.500L524 166.500H503.500L497 158.500H480.500L475.500 152.500H441.500z" />
      <path d="M450.500 487.500H479.500V491.500L484 495L490 504.500H536.500L545.500 493.500H548.500V487.500H552.500L586.500 452.500L587.500 447.500H599V441.500H620.500V413H657L656.500 385H619.500L615 358L609 346L612 365L613 405L607.500 410.500H595.500L587 422H570.500L563.500 432.500H538.500V449L531 456.500H511L505.500 464.500H489L484 470.500H450.500z" />
    </g>

    {/* retaining ring */}
    <g fill="#7f8896" stroke="#5a3a80" strokeWidth="0.8">
      <path d="M457.500 152.500H467.500L470.500 160L470 175.500H455V170H445L446 165L453 161.500L457.500 160z" />
      <path d="M452.500 453.500H461.500V447.500H476L477.500 450V465L475.500 470.500H465.500V463.500L455 460.500z" />
    </g>

    {/* light that shows between the lenses */}
    <path d="M455 187C461 184 467 182 473 181.500L490 215L492 300L494 420L480 442C473 442 467 441 461 438z" fill="url(#blueV)" />
    <path d="M486 206L500 204L506 418H491L486 350z" fill="#3094e2" />
    <path d="M541.500 248.500C530 250 519 260 513 275L516 295L515 325L514.500 356C521 366 531 374 544 374.500L560 370V250z" fill="url(#blueArc)" />
    <path d="M558 262L562 261C564 256 568 254 572 254.500L576 300V367.500L564 366L558 330z" fill="#2f92de" />
    <path d="M594 266C584 268 577 280 576 292V325C577 340 584 352 595 356z" fill="#3094e2" />
    <path d="M607 277L616 263L619 370L609 346z" fill="#3094e2" />

    {/* baffles */}
    <g fill="url(#rust)">
      <path d="M455 177.500L470 175.500V164L487.500 160L488.500 205L484 182H473C466 182 460 184 455 187z" />
      <path d="M461 438C467 441 473 442 480 442H491L493 418H494.500V463L478 461V448H461.500z" />
      <path d="M523.500 204H526V237L518 240L523 233z" />
      <path d="M523 383H530V418H529V388z" />
      <path d="M525 255C533 236 546 222 562.500 220V250H541.500C534 250 529 252 525 255z" />
      <path d="M562.500 244C568 235 578 229 589.500 229V263L588.500 255H572C567 255 564 257 562.500 260z" />
      <path d="M527 368C535 386 548 397 566 400V368L565 374.500H544C537 374 532 372 527 368z" />
      <path d="M565.500 383C572 391 582 394 593.500 393.500L592 358V367.500H575C571 367 568 366 565.500 365z" />
    </g>
    <path d="M487.500 160L488.500 205M494.500 418V463M525.500 204V237M530 384V418M562.500 220V250M589.500 229V263M566 368V400M593 358V393" stroke="#4a1440" strokeWidth="1.2" fill="none" />

    {/* lens cut faces */}
    <g fill="#2470a8" stroke="#3a2f86" strokeWidth="0.9" strokeLinejoin="round">
      <path d="M444.500 170.500H454.500L457.500 310L461.500 453.500H452.500L448 310z" />
      <path d="M473.500 181.500H484C485 200 488.500 212 488.500 228C488 244 485 250 485 262C485 276 493.500 292 493.500 315C493 330 487.500 338 487.500 352C487.500 366 492.500 376 492.500 388C493 404 493 425 491 442H480C472 436 466.500 408 466.500 382C466.500 352 479.500 340 479.500 315C479.500 292 463 272 463 236C463 212 466 188 473.500 181.500z" />
      <path d="M497.500 204H524L523 233C515 242 511 254 511.500 265C512 278 516 290 516 310C516 330 513 345 514 358C515 370 520 379 528.500 387.500V419.500H503C499 408 493 382 493 362C493 350 497 340 497 315C497 290 489 268 489 248C489 234 493 212 497.500 204z" />
      <path d="M541.500 248.500H560L561.500 255C560 270 559 290 559 312C559.500 335 562 355 565 374.500H544C534 354 518.500 340 518.500 312C518.500 284 536 266 541.500 248.500z" />
      <path d="M571.500 254.500H588.500V266C580 270 576 280 576 292V325C577 342 583 352 591.500 357V367.500H574.500C566 352 563 335 563 312C562.500 288 565 264 571.500 254.500z" />
      <path d="M593.500 266H605.500C608 284 610.500 295 610.500 312C610.500 330 609 342 608 356H595C589 346 587 330 586.500 312C586.500 290 588 274 593.500 266z" />
      <path d="M616 237.500H653L656.500 384.500H619.500z" />
    </g>

    {/* coordinate triad */}
    <path d="M538.500 311.500H550.500" stroke="#7be3f2" /><path d="M541 312.500h3" stroke="#b0453c" strokeWidth="0.7" />
    <path d="M550.500 311.500V325" stroke="#3fdc4a" strokeWidth="1.1" />
    <circle cx="538.5" cy="311.5" r="1.7" fill="#4be9f7" /><circle cx="550.5" cy="325" r="1.7" fill="#39e83f" />
  </ModelSvg>
);

/* ---------- status bar ---------- */
const Status = styled.footer`
  display: flex;
  align-items: center;
  flex: none;
  height: 20px;
  padding: 2px 8px 0 3px;
  background: #f5f9fa;
  border-top: 1px solid #c3c9cc;
`;
const StatusSep = styled.span`
  width: 1px;
  height: 15px;
  margin: 0 3px;
  background: #cdd1d3;
`;
const Message = styled.p`
  display: flex;
  align-items: center;
  gap: 2px;
  margin: 0 auto 4px 0;
  white-space: nowrap;
`;
const Dot = styled.span`
  width: 3px;
  height: 3px;
  border-radius: 50%;
  background: #2a6f94;
`;
const FramedButton = styled.button`
  display: flex;
  align-items: center;
  justify-content: center;
  gap: 4px;
  width: 23px;
  height: 15px;
  margin-right: 2px;
  border: 1px solid #c3c7ca;
  background: #f8f9fa;
`;
const SelectWrap = styled.label`
  display: grid;
  align-items: center;
  width: 94px;
  height: 13px;
  margin-left: 48px;
  border: 1px solid #b5babd;
  background: #f8f9fa;
  & > * { grid-area: 1 / 1; }
`;
const FilterSelect = styled.select`
  appearance: none;
  width: 100%;
  height: 11px;
  padding-left: 4px;
`;
const SelectArrow = styled.span`
  justify-self: end;
  display: grid;
  place-items: center;
  width: 10px;
  height: 11px;
  border-left: 1px solid #c3c7ca;
  pointer-events: none;
`;
const SharedDefs = styled.svg`
  position: absolute;
`;

export default function App() {
  return (
    <Shell>
      <GlobalStyle />
      <SharedDefs width="0" height="0" aria-hidden="true">
        <defs>
          <radialGradient id="ballShade" cx="0.38" cy="0.3" r="0.75"><stop offset="0" stopColor="#fff" /><stop offset="0.3" stopColor="#b4b4b4" /><stop offset="0.7" stopColor="#4a4a4a" /><stop offset="1" stopColor="#1d1d1d" /></radialGradient>
          <linearGradient id="paneShade" x1="0" y1="0" x2="1" y2="1"><stop offset="0" stopColor="#fff" /><stop offset="1" stopColor="#9fcbe0" /></linearGradient>
        </defs>
      </SharedDefs>

      <MenuBar>
        <MenuTab $kind="file">File</MenuTab>
        <MenuTab $kind="active">Model</MenuTab>
        {['Analysis', 'Live Simulation', 'Annotate', 'Manikin', 'Tools', 'View', 'Framework', 'Applications'].map(t => (
          <MenuTab key={t}>{t}</MenuTab>
        ))}
        <MenuTools>
          <BareButton aria-label="Minimize ribbon"><svg width="8" height="8" viewBox="0 0 8 8"><path d="M1.500 5L4 2.500 6.500 5" stroke="#fff" strokeWidth="1.4" fill="none" /></svg></BareButton>
          <BareButton aria-label="Search"><svg width="8" height="8" viewBox="0 0 8 8"><circle cx="4.8" cy="3.2" r="2" stroke="#dfe3e3" fill="none" /><path d="M3.400 4.800L1.200 7" stroke="#dfe3e3" strokeWidth="1.2" /></svg></BareButton>
          <BareButton aria-label="Learning"><svg width="8" height="8" viewBox="0 0 8 8"><path d="M4 1l4 2-4 2-4-2zM1.500 4.800L4 6l2.500-1.200v1.500L4 7.400 1.500 6.300z" fill="#eef1f1" /></svg></BareButton>
          <BareButton aria-label="Learning menu"><Caret c="#e6e9e9" /></BareButton>
          <BareButton aria-label="Help"><svg width="8" height="8" viewBox="0 0 8 8"><path d="M2 2.500c.2-2 4-1.800 3.600.2C5.400 3.800 4 3.800 4 5M4 6v1.300" stroke="#eef1f1" strokeWidth="1.2" fill="none" /></svg></BareButton>
        </MenuTools>
      </MenuBar>

      <Ribbon>
        <Group w={84} label="Operations">
          <Big w={40} icon="regenerate" lines={['Regenerate']} menu="below" />
          <Stack $w={43}>
            <Small icon="copy" text="Copy" off /><Small icon="paste" text="Paste" menu off /><Small icon="del" text="Delete" menu off />
          </Stack>
        </Group>
        <Group w={82} label="Get Data" center>
          <Stack $w={77}>
            <Small icon="udf" text="User-Defined Feature" /><Small icon="copyGeo" text="Copy Geometry" /><Small icon="shrink" text="Shrinkwrap" />
          </Stack>
        </Group>
        <Group w={157} label="Component">
          <Big w={36} icon="assemble" lines={['Assemble']} menu="below" />
          <Stack $w={72}>
            <Small icon="create" text="Create" menu /><Small icon="repeat" text="Repeat" off /><Small icon="mirror" text="Mirror Component" />
          </Stack>
          <Divider />
          <Big w={47} icon="drag" lines={['Drag', 'Components']} />
        </Group>
        <Group w={123} label="Datum">
          <Big w={25} icon="plane" lines={['Plane']} />
          <Stack $w={69}>
            <Small icon="axis" text="Axis" /><Small icon="point" text="Point" menu /><Small icon="csys" text="Coordinate System" />
          </Stack>
          <Big w={28} icon="sketch" lines={['Sketch']} />
        </Group>
        <Group w={54} label="Cut &amp; Surface" center>
          <Stack $w={38}>
            <Small icon="hole" text="Hole" /><Small icon="extrude" text="Extrude" /><Small icon="revolve" text="Revolve" />
          </Stack>
        </Group>
        <Group w={40} label="Modifiers">
          <Big w={38} icon="pattern" lines={['Pattern']} menu="below" />
        </Group>
        <Group w={226} label="Model Display">
          <Big w={32} icon="manage" lines={['Manage', 'Views']} menu="inline" />
          <Big w={24} icon="section" lines={['Section']} menu="below" />
          <Big w={45} icon="sphere" lines={['Appearances']} menu="below" />
          <Stack $w={57}>
            <Small icon="exploded" text="Exploded View" /><Small icon="toggle" text="Toggle Status" off /><Small icon="editPos" text="Edit Position" />
          </Stack>
          <Big w={28} icon="display" lines={['Display', 'Style']} menu="inline" />
          <Big w={36} icon="perspective" lines={['Perspective', 'View']} />
        </Group>
        <Group w={174} label="Model Intent">
          <Big w={43} icon="compInterface" lines={['Component', 'Interface']} />
          <Big w={31} icon="publish" lines={['Publish', 'Geometry']} />
          <Big w={27} icon="family" lines={['Family', 'Table']} />
          <Stack $w={72}>
            <Small icon="params" text="Parameters" /><Small icon="switchDim" text="Switch Dimensions" /><Small icon="relations" text="Relations" />
          </Stack>
        </Group>
        <Group w={70} label="Investigate">
          <Big w={35} icon="bom" lines={['Bill of', 'Materials']} />
          <Big w={32} icon="refViewer" lines={['Reference', 'Viewer']} />
        </Group>
      </Ribbon>

      <Work>
        <Side>
          <SideTabs>
            <SideTab $on aria-label="Model tree"><Icon name="modelTree" /></SideTab>
            <SideTab aria-label="Folder browser"><Icon name="layers" /></SideTab>
            <SideTab aria-label="Favorites"><Icon name="favFolder" /></SideTab>
          </SideTabs>
          <SideTools>
            <ToolButton $w={10} aria-label="Model"><Icon name="greenCube" size={8} /></ToolButton>
            <Rule $dots />
            <Spacer />
            <ToolButton aria-label="Expand"><Icon name="list1" /></ToolButton>
            <ToolButton $w={12} aria-label="Collapse"><Icon name="list2" /></ToolButton>
            <ToolButton $on aria-label="Columns"><Icon name="columns" /></ToolButton>
            <Rule />
            <ToolButton aria-label="Tree filters"><Icon name="treeFilter" /></ToolButton>
            <ToolButton aria-label="Tree columns"><Icon name="treeCols" /></ToolButton>
            <Rule />
            <ToolButton $w={18} aria-label="Settings"><Icon name="gears" /></ToolButton>
            <Spacer />
            <ToolButton $w={12} aria-label="More"><Icon name="more" /></ToolButton>
            <ToolButton aria-label="Report"><Icon name="doc" /></ToolButton>
          </SideTools>
          <SearchRow>
            <Icon name="funnel" />
            <SearchBox>
              <SearchInput aria-label="Filter tree" />
              <ClearButton aria-label="Clear"><svg width="5" height="5" viewBox="0 0 5 5"><path d="M.3.3l4.400 4.400M4.700.3L.3 4.700" stroke="#8b8f92" strokeWidth="0.7" /></svg></ClearButton>
            </SearchBox>
            <ToolButton $w={11} aria-label="Filter options"><Caret /></ToolButton>
            <ToolButton $w={11} aria-label="Add"><Icon name="plus" /></ToolButton>
          </SearchRow>
          <Tree $top={5}>
            <Row><Icon name="asm" />CAMERAFINAL.ASM</Row>
            {treeRows.map(r => (
              <Row key={r.t}>
                <Twist>{r.twist && <Right />}</Twist><Icon name={r.icon} />{r.t}
              </Row>
            ))}
          </Tree>
          <InsertLine />
          <Tree $top={4}>
            <Row><Twist><Down /></Twist><Icon name="sect" />Sections</Row>
            <Row $nested><Icon name="sectOn" />XSEC0001</Row>
            <Row $nested><Icon name="sect" />XSEC0002</Row>
          </Tree>
        </Side>

        <Viewport>
          <ViewTools>
            {viewTools.map(n => (
              <ToolButton key={n} aria-label={n} $on={n === 'annot' || n === 'spin'}><Icon name={n} /></ToolButton>
            ))}
          </ViewTools>
          <Model />
          <ClipNote>Clipping State:XSEC0001</ClipNote>
        </Viewport>
      </Work>

      <Status>
        <ToolButton $w={13} $on aria-label="Navigator"><Icon name="navToggle" /></ToolButton>
        <ToolButton $w={16} aria-label="Browser"><Icon name="browser" /></ToolButton>
        <ToolButton aria-label="Full screen"><Icon name="fullScreen" /></ToolButton>
        <StatusSep />
        <Message><Dot />Using the template default $PRO_DIRECTORY\templates\inlbs_asm_design_abs.asm as the template.</Message>
        <StatusSep />
        <FramedButton aria-label="Find"><Icon name="find" /><Caret /></FramedButton>
        <FramedButton aria-label="Selection"><Icon name="selBox" /></FramedButton>
        <SelectWrap>
          <FilterSelect aria-label="Selection filter" defaultValue="Geometry"><option>Geometry</option></FilterSelect>
          <SelectArrow><Caret /></SelectArrow>
        </SelectWrap>
      </Status>
    </Shell>
  );
}
